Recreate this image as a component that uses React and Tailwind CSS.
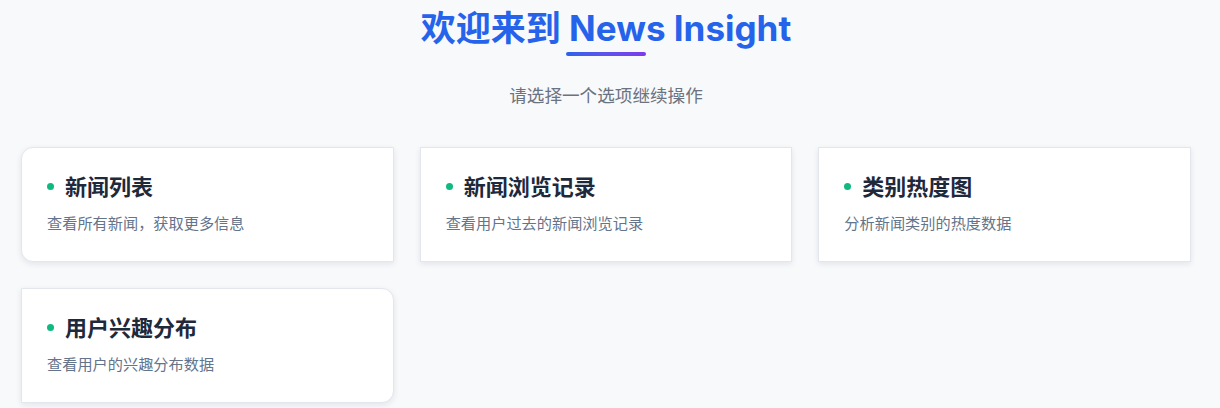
import React from 'react';

const cards = [
  { title: '新闻列表', desc: '查看所有新闻，获取更多信息', shape: 'rounded-l-[12px]' },
  { title: '新闻浏览记录', desc: '查看用户过去的新闻浏览记录', shape: '' },
  { title: '类别热度图', desc: '分析新闻类别的热度数据', shape: '' },
  { title: '用户兴趣分布', desc: '查看用户的兴趣分布数据', shape: 'rounded-r-[12px]' },
];

const Card = ({ title, desc, shape }) => (
  <div className={`bg-white border border-[#e3e6ec] shadow-[0_2px_6px_rgba(15,23,42,0.09)] px-[25px] pt-[23px] pb-[26px] ${shape}`}>
    <div className="flex items-center">
      <span className="w-[7px] h-[7px] rounded-full bg-[#10b981] mr-[11px]" />
      <h3 className="text-[22px] leading-[31px] font-bold text-[#1e293b]">{title}</h3>
    </div>
    <p className="mt-[9px] text-[15.2px] leading-[24px] text-[#64748b]">{desc}</p>
  </div>
);

export default function App() {
  return (
    <div
      className="min-h-[408px] w-full bg-[#f8f9fb] pr-[8px]"
      style={{ fontFamily: '"Noto Sans", "Noto Sans CJK SC", sans-serif' }}
    >
      <div className="flex flex-col items-center pt-[7px]">
        <h1
          className="text-[35px] leading-[42px] font-bold text-[#2563eb]"
          style={{ fontFamily: 'Inter, "Noto Sans CJK SC", sans-serif' }}
        >
          欢迎来到 News Insight
        </h1>
        <div className="mt-[3px] h-[4px] w-[80px] rounded-full bg-gradient-to-r from-[#2563eb] to-[#7c3aed]" />
        <p className="mt-[26px] text-[17.6px] leading-[26px] text-[#6b7280]">请选择一个选项继续操作</p>
      </div>
      <div className="mx-auto mt-[39px] grid w-[1170px] grid-cols-3 gap-x-[26px] gap-y-[26px]">
        {cards.map((c) => (
          <Card key={c.title} {...c} />
        ))}
      </div>
    </div>
  );
}
